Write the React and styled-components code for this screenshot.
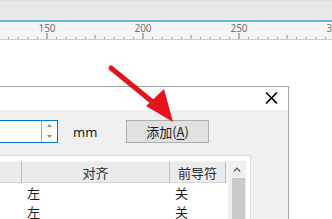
import React from 'react';
import styled, { createGlobalStyle } from 'styled-components';

const GlobalStyle = createGlobalStyle`
  html, body {
    margin: 0;
    padding: 0;
    background: #ffffff;
    overflow: hidden;
  }
  body {
    font-family: "Noto Sans", "Noto Sans CJK SC", sans-serif;
    font-size: 12px;
    color: #1a1a1a;
  }
`;

const Screen = styled.div`
  position: relative;
  width: 332px;
  height: 219px;
  overflow: hidden;
  background: #ffffff;
`;

const Toolbar = styled.div`
  height: 19px;
  background: #e8e8e8;
  border-top: 1px solid #dedede;
  border-bottom: 2px solid #5ab6dc;
`;

const RulerBar = styled.div`
  height: 17px;
  background: #f5f5f7;
  border-bottom: 1px solid #c9c9c9;
  svg {
    display: block;
  }
`;

const Canvas = styled.div`
  padding-top: 46px;
`;

const Dialog = styled.div`
  width: 288px;
  border-top: 1px solid #a3a3a3;
  border-right: 1px solid #a3a3a3;
  background: #f0f0f0;
`;

const TitleBar = styled.div`
  height: 23px;
  background: #ffffff;
  display: flex;
  justify-content: flex-end;
  align-items: flex-start;
  padding-right: 10px;
  svg {
    margin-top: 5px;
  }
`;

const Body = styled.div`
  padding-top: 10px;
  height: 120px;
`;

const ControlRow = styled.div`
  display: flex;
  align-items: center;
  height: 23px;
`;

const SpinBox = styled.div`
  display: flex;
  width: 57px;
  height: 21px;
  background: #ffffff;
  border: 1px solid #0078d7;
  border-left: none;
`;

const SpinField = styled.div`
  flex: 1;
`;

const SpinButtons = styled.div`
  width: 16px;
  border-left: 1px solid #7eb4ea;
  display: flex;
  flex-direction: column;
  justify-content: space-between;
  align-items: center;
  padding: 3px 0 4px;
  box-sizing: border-box;
`;

const Unit = styled.span`
  margin-left: 15px;
  width: 53px;
  font-size: 13px;
  color: #1a1a1a;
`;

const Button = styled.div`
  box-sizing: border-box;
  width: 83px;
  height: 23px;
  background: #e1e1e1;
  border: 1px solid #adadad;
  display: flex;
  align-items: center;
  justify-content: center;
  font-family: "Noto Sans CJK SC", sans-serif;
  font-size: 13px;
  color: #1a1a1a;
  u {
    text-underline-offset: 2px;
  }
`;

const Table = styled.div`
  margin-top: 12px;
  width: 250px;
  height: 70px;
  background: #ffffff;
  border-top: 1px solid #dadada;
  border-right: 1px solid #dadada;
  padding-top: 5px;
  display: flex;
`;

const Grid = styled.div`
  width: 227px;
`;

const HeaderRow = styled.div`
  display: flex;
  height: 22px;
  background: #ebebeb;
  border-top: 1px solid #f6f6f6;
  border-bottom: 1px solid #d5d5d5;
  box-sizing: border-box;
`;

const HeadCell = styled.div`
  box-sizing: border-box;
  width: ${(p) => p.$w}px;
  border-right: 1px solid #bdbdbd;
  display: flex;
  align-items: center;
  justify-content: center;
  font-family: "Noto Sans CJK SC", sans-serif;
  font-size: 13px;
  color: #2b2b2b;
`;

const Row = styled.div`
  display: flex;
  height: 19px;
  &:first-of-type {
    margin-top: 1px;
  }
`;

const Cell = styled.div`
  width: ${(p) => p.$w}px;
  padding-left: 5px;
  box-sizing: border-box;
  display: flex;
  align-items: center;
  font-family: "Noto Sans CJK SC", sans-serif;
  font-size: 13px;
  color: #1a1a1a;
`;

const ScrollTrack = styled.div`
  width: 18px;
  margin-left: 1px;
  background: #f0f0f0;
  display: flex;
  flex-direction: column;
  align-items: center;
`;

const ScrollArrow = styled.div`
  height: 17px;
  display: flex;
  align-items: center;
  justify-content: center;
`;

const ScrollThumb = styled.div`
  width: 13px;
  margin-left: 2px;
  flex: 1;
  background: #c9c9c9;
`;

const ArrowLayer = styled.svg`
  position: absolute;
  left: 0;
  top: 0;
  pointer-events: none;
`;

function Ruler() {
  const ticks = [];
  for (let i = -5; i < 30; i += 1) {
    const x = 47 + i * 9.6;
    if (x < 0 || x > 332) continue;
    const k = ((i % 10) + 10) % 10;
    if (k === 0) {
      ticks.push(<line key={i} x1={x} x2={x} y1={11} y2={17} stroke="#6e6e6e" strokeWidth="1" />);
    } else if (k === 5) {
      ticks.push(<line key={i} x1={x} x2={x} y1={13} y2={17} stroke="#8a8a8a" strokeWidth="1" />);
    } else {
      ticks.push(<line key={i} x1={x} x2={x} y1={15} y2={17} stroke="#a0a0a0" strokeWidth="1" />);
    }
  }
  const labels = [150, 200, 250, 300];
  return (
    <svg width="332" height="17" viewBox="0 0 332 17">
      {ticks}
      {labels.map((v, i) => (
        <text
          key={v}
          x={47 + i * 96}
          y={10}
          textAnchor="middle"
          fontFamily="Noto Sans, sans-serif"
          fontSize="10"
          fill="#747474"
        >
          {v}
        </text>
      ))}
    </svg>
  );
}

const columns = [22, 148, 56];
const rows = [
  ['', '左', '关'],
  ['', '左', '关'],
];

export default function App() {
  return (
    <Screen>
      <GlobalStyle />
      <Toolbar />
      <RulerBar>
        <Ruler />
      </RulerBar>
      <Canvas>
        <Dialog>
          <TitleBar>
            <svg width="13" height="12" viewBox="0 0 13 12">
              <path d="M1 0.5 L12 11.5 M12 0.5 L1 11.5" stroke="#000" strokeWidth="1.6" />
            </svg>
          </TitleBar>
          <Body>
            <ControlRow>
              <SpinBox>
                <SpinField />
                <SpinButtons>
                  <svg width="5" height="3" viewBox="0 0 5 3">
                    <path d="M0 3 L2.5 0 L5 3 Z" fill="#8a8a8a" />
                  </svg>
                  <svg width="5" height="3" viewBox="0 0 5 3">
                    <path d="M0 0 L2.5 3 L5 0 Z" fill="#8a8a8a" />
                  </svg>
                </SpinButtons>
              </SpinBox>
              <Unit>mm</Unit>
              <Button>
                添加(<u>A</u>)
              </Button>
            </ControlRow>
            <Table>
              <Grid>
                <HeaderRow>
                  <HeadCell $w={columns[0]} />
                  <HeadCell $w={columns[1]}>对齐</HeadCell>
                  <HeadCell $w={columns[2]}>前导符</HeadCell>
                </HeaderRow>
                {rows.map((r, i) => (
                  <Row key={i}>
                    {r.map((c, j) => (
                      <Cell key={j} $w={columns[j]}>{c}</Cell>
                    ))}
                  </Row>
                ))}
              </Grid>
              <ScrollTrack>
                <ScrollArrow>
                  <svg width="8" height="5" viewBox="0 0 8 5">
                    <path d="M0.8 4.5 L4 1.2 L7.2 4.5" stroke="#606060" strokeWidth="1.3" fill="none" />
                  </svg>
                </ScrollArrow>
                <ScrollThumb />
              </ScrollTrack>
            </Table>
          </Body>
        </Dialog>
      </Canvas>
      <ArrowLayer width="332" height="219" viewBox="0 0 332 219">
        <line x1="111" y1="68" x2="155" y2="104" stroke="#e5141c" strokeWidth="5" strokeLinecap="round" />
        <polygon points="173,122 146,106 164,89" fill="#e5141c" />
      </ArrowLayer>
    </Screen>
  );
}
